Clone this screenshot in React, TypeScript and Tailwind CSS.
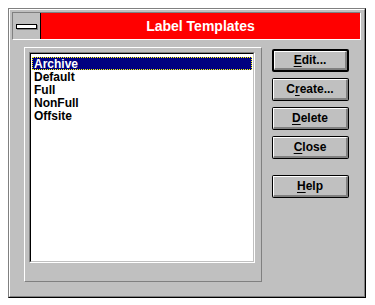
import React from "react";

const items = ["Archive", "Default", "Full", "NonFull", "Offsite"];

function Btn({ label, idx, isDefault }: { label: string; idx: number; isDefault?: boolean }) {
  return (
    <div
      className={
        "w-[77px] h-[23px] bg-black rounded-[2px] " + (isDefault ? "p-[2px]" : "p-[1px]")
      }
    >
      <div className="w-full h-full bg-[#c0c0c0] border-l border-t border-white border-r-2 border-b-2 border-r-[#808080] border-b-[#808080] flex items-center justify-center text-[12px] font-bold text-black leading-none">
        <span>
          {label.slice(0, idx)}
          <span className="underline underline-offset-2">{label[idx]}</span>
          {label.slice(idx + 1)}
        </span>
      </div>
    </div>
  );
}

export default function App() {
  return (
    <div
      className="w-[375px] h-[305px] bg-white pt-2 pl-2"
      style={{ fontFamily: '"Liberation Sans", Arial, sans-serif' }}
    >
      <div className="w-[358px] h-[290px] bg-[#c0c0c0] border border-[#808080] border-r-black border-b-black">
        <div className="w-full h-full border border-white border-r-[#808080] border-b-[#808080] pt-[2px] pl-[2px] pr-[3px]">
          {/* title bar */}
          <div className="flex h-[28px] border border-[#808080] border-r-white border-b-white">
            <div className="w-[28px] h-full border-r border-black flex items-center pl-[3px]">
              <div className="w-[21px] h-[5px] bg-white border border-black shadow-[1px_1px_0_#808080]" />
            </div>
            <div className="flex-1 bg-[#ff0000] flex items-center justify-center text-white font-bold text-[14px]">
              Label Templates
            </div>
          </div>

          <div className="flex items-start mt-[7px] ml-[12px]">
            {/* list group */}
            <div className="w-[238px] h-[235px] border border-white border-r-[#808080] border-b-[#808080] pt-[4px] pl-[4px]">
              <div className="w-[226px] h-[211px] border border-[#808080] border-r-white border-b-white">
                <div className="w-full h-full border border-black border-r-[#c0c0c0] border-b-[#c0c0c0] bg-white pt-[3px] px-[1px]">
                  {items.map((it, i) => (
                    <div
                      key={it}
                      className={
                        "h-[13px] pl-[2px] pt-[2px] text-[12px] font-bold leading-[11px] " +
                        (i === 0
                          ? "bg-[#000080] text-white outline-1 outline-dotted outline-[#ffff00] -outline-offset-1"
                          : "text-black")
                      }
                    >
                      {it}
                    </div>
                  ))}
                </div>
              </div>
            </div>

            {/* buttons */}
            <div className="ml-[10px] mt-[2px] flex flex-col">
              <Btn label="Edit..." idx={0} isDefault />
              <div className="mt-[6px]">
                <Btn label="Create..." idx={1} />
              </div>
              <div className="mt-[6px]">
                <Btn label="Delete" idx={0} />
              </div>
              <div className="mt-[6px]">
                <Btn label="Close" idx={0} />
              </div>
              <div className="mt-[16px]">
                <Btn label="Help" idx={0} />
              </div>
            </div>
          </div>
        </div>
      </div>
    </div>
  );
}
